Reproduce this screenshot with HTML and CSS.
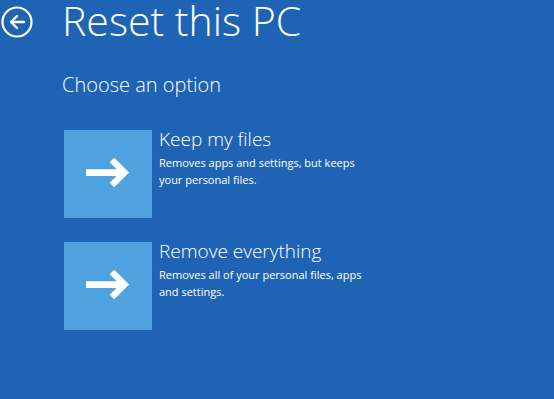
FILE: index.html
```html
<!DOCTYPE html>
<html>
  <head>
    <link rel="stylesheet" href="styles.css">
  </head>
  <body>
    <div class="header">
      <span class="back">
        <svg width="34" height="34" viewBox="0 0 34 34">
          <circle cx="17" cy="17" r="14.5" fill="none" stroke="#fff" stroke-width="2.2"/>
          <path d="M24 17H11M17 11l-6 6 6 6" fill="none" stroke="#fff" stroke-width="2.4" stroke-linecap="round" stroke-linejoin="round"/>
        </svg>
      </span>
      <h1>Reset this PC</h1>
    </div>

    <div class="content">
      <h2>Choose an option</h2>

      <div class="option">
        <div class="tile">
          <svg width="88" height="88" viewBox="0 0 88 88">
            <path d="M22 42.7H60" stroke="#fff" stroke-width="6.7"/>
            <path d="M48 30L60.5 42.5L48 55" fill="none" stroke="#fff" stroke-width="6.5" stroke-miterlimit="4"/>
          </svg>
        </div>
        <div class="text">
          <h3>Keep my files</h3>
          <p>Removes apps and settings, but keeps your personal files.</p>
        </div>
      </div>

      <div class="option">
        <div class="tile">
          <svg width="88" height="88" viewBox="0 0 88 88">
            <path d="M22 42.7H60" stroke="#fff" stroke-width="6.7"/>
            <path d="M48 30L60.5 42.5L48 55" fill="none" stroke="#fff" stroke-width="6.5" stroke-miterlimit="4"/>
          </svg>
        </div>
        <div class="text">
          <h3>Remove everything</h3>
          <p>Removes all of your personal files, apps and settings.</p>
        </div>
      </div>
    </div>
  </body>
</html>
```

FILE: styles.css
```css
body {
  font-family: "Open Sans", sans-serif;
  margin: 0;
  padding: 0;
  background-color: #1f64b4;
  color: white;
  height: 399px;
  overflow: hidden;
}

.header {
  display: flex;
  align-items: flex-start;
}

.back {
  display: block;
  margin-top: 5px;
}

.back svg {
  display: block;
}

h1 {
  font-size: 41px;
  font-weight: 300;
  margin: 0 0 0 28px;
  line-height: 40px;
}

.content {
  padding-left: 62px;
}

h2 {
  font-size: 20px;
  font-weight: 300;
  margin: 31px 0 31px 0;
  line-height: 28px;
}

.option {
  display: flex;
  margin: 0 0 24px 2px;
}

.tile {
  width: 88px;
  height: 88px;
  background-color: #4fa2dd;
}

.tile svg {
  display: block;
}

.text {
  margin-left: 7px;
  width: 215px;
}

h3 {
  font-size: 19px;
  font-weight: 300;
  margin: -5px 0 1px 0;
  line-height: 28px;
}

p {
  font-size: 11px;
  line-height: 17px;
  margin: 0;
}
```
